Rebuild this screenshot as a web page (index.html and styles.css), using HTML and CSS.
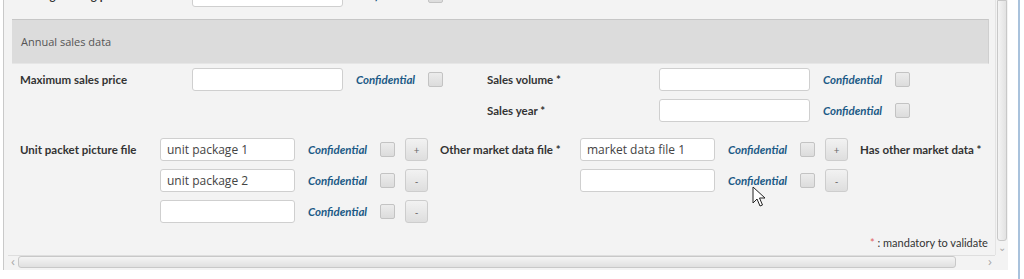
FILE: index.html
```html
<!DOCTYPE html>
<html lang="en">
<head>
  <meta charset="UTF-8">
  <title>Annual sales data</title>
  <link rel="stylesheet" href="styles.css">
</head>
<body>
  <div class="window">
    <div class="viewport">
      <div class="content">
        <div class="cut-row">
          <span class="label la">Average selling price</span>
          <input type="text" class="field wide">
          <span class="conf">Confidential</span>
          <span class="check"></span>
        </div>

        <div class="section-head">Annual sales data</div>

        <div class="grid-a">
          <div class="cell">
            <span class="label la">Maximum sales price</span>
            <input type="text" class="field wide">
            <span class="conf">Confidential</span>
            <span class="check"></span>
          </div>
          <div class="cell">
            <span class="label la">Sales volume *</span>
            <input type="text" class="field wide">
            <span class="conf">Confidential</span>
            <span class="check"></span>
          </div>
          <div class="cell"></div>
          <div class="cell">
            <span class="label la">Sales year *</span>
            <input type="text" class="field wide">
            <span class="conf">Confidential</span>
            <span class="check"></span>
          </div>
        </div>

        <div class="grid-b">
          <div class="col">
            <div class="cell">
              <span class="label lb">Unit packet picture file</span>
              <input type="text" class="field narrow" value="unit package 1">
              <span class="conf">Confidential</span>
              <span class="check"></span>
              <button class="pm">+</button>
            </div>
            <div class="cell">
              <span class="label lb"></span>
              <input type="text" class="field narrow" value="unit package 2">
              <span class="conf">Confidential</span>
              <span class="check"></span>
              <button class="pm">-</button>
            </div>
            <div class="cell">
              <span class="label lb"></span>
              <input type="text" class="field narrow">
              <span class="conf">Confidential</span>
              <span class="check"></span>
              <button class="pm">-</button>
            </div>
          </div>
          <div class="col">
            <div class="cell">
              <span class="label lb">Other market data file *</span>
              <input type="text" class="field narrow" value="market data file 1">
              <span class="conf">Confidential</span>
              <span class="check"></span>
              <button class="pm">+</button>
            </div>
            <div class="cell">
              <span class="label lb"></span>
              <input type="text" class="field narrow">
              <span class="conf">Confidential</span>
              <span class="check"></span>
              <button class="pm">-</button>
            </div>
          </div>
          <div class="col">
            <div class="cell">
              <span class="label">Has other market data *</span>
            </div>
          </div>
        </div>

        <div class="legend"><span class="star">*</span> : mandatory to validate the form</div>
      </div>
      <div class="vscroll">
        <div class="vtrack"><div class="vthumb"></div></div>
        <div class="arrow">&#8964;</div>
      </div>
    </div>
    <div class="hscroll">
      <div class="arrow">&lsaquo;</div>
      <div class="hthumb"></div>
      <div class="hrest"></div>
      <div class="arrow">&rsaquo;</div>
    </div>

    <svg class="cursor" width="14" height="22" viewBox="0 0 14 22">
      <path d="M1 1 L1 17 L5 13 L8 20 L10.5 19 L7.5 12 L13 12 Z" fill="#fff" stroke="#222" stroke-width="1" stroke-linejoin="round"/>
    </svg>
  </div>
  <div class="edge"></div>
</body>
</html>
```

FILE: styles.css
```css
html, body {
  margin: 0;
  padding: 0;
  background: #fff;
  height: 279px;
  overflow: hidden;
}
body {
  font-family: "Open Sans", "Noto Sans", sans-serif;
  font-size: 11px;
  color: #333;
  display: flex;
}
.window {
  position: relative;
  margin-left: 3px;
  width: 1004px;
  height: 270px;
  border-left: 1px solid #c9c9c9;
  background: #f3f3f3;
  display: flex;
  flex-direction: column;
}
.edge {
  width: 2px;
  margin-left: 10px;
  height: 279px;
  background: #a9c2dc;
}
.viewport {
  flex: 1;
  display: flex;
  overflow: hidden;
}
.content {
  flex: 1;
  overflow: hidden;
  padding-left: 16px;
  margin-right: 6px;
}
.cut-row {
  display: flex;
  align-items: center;
  margin-top: -16px;
  height: 22px;
}
.section-head {
  margin: 13px 0 0 -8px;
  height: 43px;
  border-top: 1px solid #c6c6c6;
  border-bottom: 1px solid #e6e6e6;
  border-right: 1px solid #cfcfcf;
  background: #dcdcdc;
  color: #555;
  font-size: 11px;
  padding-left: 9px;
  display: flex;
  align-items: center;
}
.label {
  font-family: Lato, "Open Sans", sans-serif;
  font-size: 11.5px;
  font-weight: 700;
  color: #333;
  white-space: nowrap;
  flex-shrink: 0;
}
.la {
  width: 172px;
}
.lb {
  width: 140px;
}
.field {
  box-sizing: border-box;
  height: 23px;
  border: 1px solid #cfcfcf;
  border-radius: 3px;
  background: #fff;
  font-family: inherit;
  font-size: 12px;
  color: #444;
  padding: 0 6px;
  flex-shrink: 0;
  margin: 0;
}
.wide {
  width: 151px;
}
.narrow {
  width: 135px;
}
.conf {
  font-family: Lato, "Open Sans", sans-serif;
  font-size: 11.5px;
  font-weight: 700;
  font-style: italic;
  color: #1c5a86;
  margin-left: 13px;
  width: 60px;
  flex-shrink: 0;
}
.check {
  width: 13px;
  height: 13px;
  border: 1px solid #c3c3c3;
  border-radius: 2px;
  background: linear-gradient(#ececec, #dcdcdc);
  margin-left: 12px;
  flex-shrink: 0;
}
.pm {
  width: 23px;
  height: 23px;
  margin-left: 10px;
  padding: 0;
  border: 1px solid #cdcdcd;
  border-radius: 3px;
  background: linear-gradient(#f2f2f2, #dedede);
  color: #666;
  font-family: inherit;
  font-size: 10px;
  flex-shrink: 0;
}
.grid-a {
  display: grid;
  grid-template-columns: 467px 467px;
  row-gap: 8px;
  margin-top: 4px;
}
.grid-b {
  display: grid;
  grid-template-columns: 420px 420px auto;
  margin-top: 16px;
}
.col {
  display: flex;
  flex-direction: column;
  gap: 8px;
}
.cell {
  display: flex;
  align-items: center;
  height: 23px;
  white-space: nowrap;
}
.legend {
  margin-top: 13px;
  padding-left: 850px;
  white-space: nowrap;
  color: #333;
  font-family: Lato, "Open Sans", sans-serif;
  font-size: 11px;
}
.star {
  color: #e06060;
}
.vscroll {
  width: 12px;
  display: flex;
  flex-direction: column;
  border-left: 1px solid #e4e4e4;
}
.vtrack {
  flex: 1;
  padding: 0 1px;
  display: flex;
}
.vthumb {
  flex: 1;
  margin-bottom: 2px;
  border: 1px solid #c8c8c8;
  border-radius: 0 0 3px 3px;
  background: linear-gradient(90deg, #f4f4f4, #e2e2e2);
}
.vscroll .arrow {
  height: 12px;
  text-align: center;
  line-height: 8px;
  font-size: 10px;
  color: #aaa;
}
.hscroll {
  height: 12px;
  margin: 0 13px 2px 4px;
  display: flex;
  align-items: stretch;
  border-top: 1px solid #dedede;
}
.hscroll .arrow {
  width: 10px;
  text-align: center;
  line-height: 11px;
  font-size: 13px;
  color: #aaa;
}
.hthumb {
  width: 936px;
  border: 1px solid #c8c8c8;
  border-radius: 3px;
  background: linear-gradient(#f4f4f4, #e0e0e0);
}
.hrest {
  flex: 1;
}
.cursor {
  position: absolute;
  left: 748px;
  top: 186px;
}
```
